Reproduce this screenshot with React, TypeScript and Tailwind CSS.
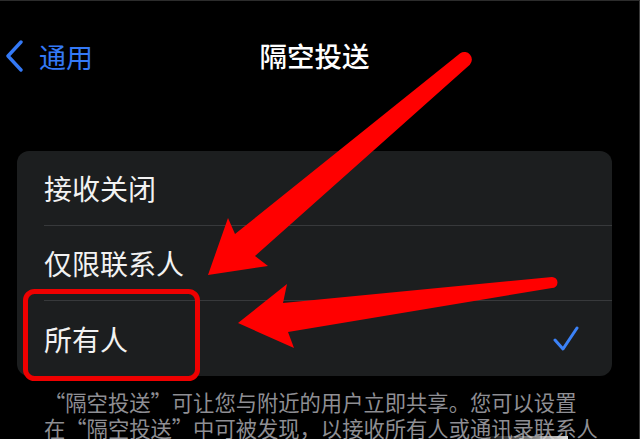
export default function App() {
  const rows = ['接收关闭', '仅限联系人', '所有人']

  return (
    <div className="relative w-[640px] h-[439px] overflow-hidden bg-black border-t border-[#2c2c2c] font-['Noto_Sans_CJK_SC',sans-serif] text-[#f2f2f2]">
      <div className="flex h-full">
        <div className="w-[629px] shrink-0">
          {/* Nav bar */}
          <div className="grid grid-cols-[1fr_auto_1fr] items-center h-[110px]">
            <div className="flex items-center text-[#3479f6]">
              <svg width="28" height="32" viewBox="0 0 28 32" className="ml-[1px]">
                <polyline points="20,2 7,16 20,30" fill="none" stroke="#3479f6" strokeWidth="3.4" strokeLinecap="round" strokeLinejoin="round" />
              </svg>
              <span className="ml-[10px] text-[27px] leading-none">通用</span>
            </div>
            <h1 className="text-[27.5px] font-medium leading-none text-white">隔空投送</h1>
            <div />
          </div>

          {/* Options card */}
          <div className="mt-[40px] mx-[17px] rounded-[12px] bg-[#1c1e1f]">
            {rows.map((label, i) => (
              <div key={label} className="h-[75px] pl-[27px]">
                <div
                  className={`flex h-full items-center justify-between pr-[33px] ${
                    i < rows.length - 1 ? 'border-b border-[#37393b]' : ''
                  }`}
                >
                  <span className="text-[28px] leading-none">{label}</span>
                  {i === rows.length - 1 && (
                    <svg width="26" height="26" viewBox="0 0 26 26">
                      <polyline points="2,14 10,23 24,2" fill="none" stroke="#3b82f7" strokeWidth="3" strokeLinecap="round" strokeLinejoin="round" />
                    </svg>
                  )}
                </div>
              </div>
            ))}
          </div>

          {/* Footer text */}
          <div className="mt-[13px] pl-[44px] text-[21.3px] leading-[26px] text-[#8e8e93] whitespace-nowrap">
            <p>“隔空投送”可让您与附近的用户立即共享。您可以设置</p>
            <p>在“隔空投送”中可被发现，以接收所有人或通讯录联系人</p>
          </div>
        </div>
        <div className="flex-1 border-r border-[#3a3a3a]" />
      </div>

      {/* watermark remnant */}
      <div className="absolute left-[482px] top-[435px] w-[86px] h-[4px] bg-gradient-to-r from-transparent to-[#d8d8d8]" />

      {/* Red annotations */}
      <svg className="absolute inset-0" width="640" height="439" viewBox="0 0 640 439">
        <path
          d="M208,274 L228,217 L235,233 L460.2,52.3 A7.5,7.5 0 0 1 469.8,63.7 L255,255 L268,265 Z"
          fill="#ff0000"
        />
        <path
          d="M238,322 L287,283 L283,302 L552,276 A5.5,5.5 0 0 1 552,287 L288,331 L294,347 Z"
          fill="#ff0000"
        />
        <rect x="25.5" y="290.5" width="172" height="87" rx="9" fill="none" stroke="#ee0000" strokeWidth="5" />
      </svg>
    </div>
  )
}
